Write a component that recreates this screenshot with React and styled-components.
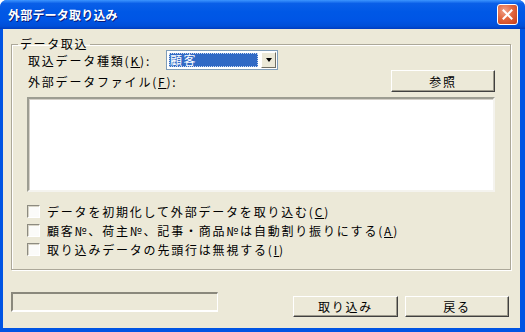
import React from 'react';
import styled, { createGlobalStyle } from 'styled-components';

const GlobalStyle = createGlobalStyle`
    html, body {
        margin: 0;
        padding: 0;
        background: #ffffff;
    }
`;

const FONT = `"Noto Sans CJK JP", "DejaVu Sans", sans-serif`;

const Window = styled.div`
    width: 525px;
    height: 332px;
    display: flex;
    flex-direction: column;
    background: #0054e3;
    border-radius: 7px 7px 0 0;
    overflow: hidden;
    font-family: ${FONT};
    font-size: 12px;
    color: #000;
`;

const TitleBar = styled.div`
    height: 29px;
    flex: none;
    display: flex;
    align-items: center;
    justify-content: space-between;
    padding: 0 7px 0 8px;
    background: linear-gradient(
        to bottom,
        #3d95ff 0%,
        #0a5fe8 12%,
        #0058e6 40%,
        #0055e5 70%,
        #004fd8 90%,
        #003cc0 100%
    );
`;

const Title = styled.span`
    color: #fff;
    font-weight: bold;
    font-size: 12px;
    line-height: 14px;
    letter-spacing: 0.2px;
    text-shadow: 1px 1px 0 #0a1b7a;
`;

const CloseButton = styled.div`
    width: 19px;
    height: 19px;
    border: 1px solid #fff;
    border-radius: 3px;
    display: flex;
    align-items: center;
    justify-content: center;
    background: radial-gradient(circle at 35% 30%, #f0a28a 0%, #e2673f 45%, #c53c17 100%);
`;

const Client = styled.div`
    flex: 1;
    display: flex;
    flex-direction: column;
    margin: 0 5px 4px 3px;
    padding: 9px 9px 11px 8px;
    background: #ece9d8;
`;

const GroupBox = styled.fieldset`
    margin: 0;
    padding: 0 15px 10px 16px;
    border: 1px solid #aca899;
    box-shadow: 1px 1px 0 #fff, inset 1px 1px 0 #fff;
    min-inline-size: 0;
`;

const Legend = styled.legend`
    margin-left: -10px;
    padding: 0 2px;
    font-size: 12px;
    line-height: 12px;
    letter-spacing: 1.6px;
`;

const Row = styled.div`
    display: flex;
    align-items: center;
    justify-content: ${(p) => p.$justify || 'flex-start'};
    height: ${(p) => p.$height}px;
`;

const Label = styled.span`
    letter-spacing: 1.8px;
    width: ${(p) => (p.$width ? `${p.$width}px` : 'auto')};
    flex: none;
    white-space: nowrap;
`;

const Combo = styled.div`
    width: 110px;
    height: 18px;
    border: 1px solid #7f9db9;
    background: #fff;
    display: flex;
    align-items: stretch;
`;

const ComboValue = styled.div`
    flex: 1;
    margin: 2px;
    padding-left: 1px;
    background: #316ac5;
    color: #fff;
    outline: 1px dotted #c9d8ee;
    outline-offset: -1px;
    font-size: 12px;
    line-height: 14px;
    letter-spacing: 1.5px;
`;

const ComboArrow = styled.div`
    width: 15px;
    margin: 1px;
    background: #ece9d8;
    border-top: 1px solid #fff;
    border-left: 1px solid #fff;
    border-right: 1px solid #716f64;
    border-bottom: 1px solid #716f64;
    box-sizing: border-box;
    display: flex;
    align-items: center;
    justify-content: center;
    &::after {
        content: '';
        border-left: 3px solid transparent;
        border-right: 3px solid transparent;
        border-top: 4px solid #000;
    }
`;

const Button = styled.button`
    width: ${(p) => p.$width}px;
    height: ${(p) => p.$height || 21}px;
    padding: 0;
    margin: 0;
    font-family: ${FONT};
    font-size: 12px;
    letter-spacing: 1.7px;
    color: #000;
    background: #ece9d8;
    border-top: 1px solid #fff;
    border-left: 1px solid #fff;
    border-right: 1px solid #404040;
    border-bottom: 1px solid #404040;
    box-shadow: inset -1px -1px 0 #9d9a8c;
    border-radius: 0;
`;

const FileBox = styled.div`
    height: 91px;
    margin: 5px 0 0 -1px;
    background: #fff;
    border-top: 2px solid #9d9d92;
    border-left: 2px solid #9d9d92;
    border-right: 2px solid #f4f3ee;
    border-bottom: 2px solid #f4f3ee;
    box-shadow: inset 1px 1px 0 #d4d0c8;
`;

const CheckList = styled.div`
    margin-top: 10px;
    display: flex;
    flex-direction: column;
`;

const CheckRow = styled.label`
    display: flex;
    align-items: center;
    height: 19px;
    margin-left: -1px;
    gap: 7px;
`;

const CheckBox = styled.span`
    width: 13px;
    height: 13px;
    box-sizing: border-box;
    flex: none;
    background: #fbfbf9;
    border-top: 1px solid #8d8b80;
    border-left: 1px solid #8d8b80;
    border-right: 1px solid #fff;
    border-bottom: 1px solid #fff;
    box-shadow: inset 1px 1px 0 #d8d5c8;
`;

const Footer = styled.div`
    margin-top: auto;
    display: flex;
    align-items: flex-start;
    padding-right: 2px;
`;

const StatusBox = styled.div`
    width: 207px;
    height: 20px;
    box-sizing: border-box;
    border-top: 2px solid #8a887c;
    border-left: 2px solid #8a887c;
    border-right: 1px solid #fff;
    border-bottom: 2px solid #fff;
`;

const FooterButtons = styled.div`
    margin-left: auto;
    margin-top: 4px;
    display: flex;
    gap: 7px;
`;

const options = [
    { key: 'C', text: 'データを初期化して外部データを取り込む' },
    { key: 'A', text: '顧客№、荷主№、記事・商品№は自動割り振りにする' },
    { key: 'I', text: '取り込みデータの先頭行は無視する' }
];

export default function App() {
    return (
        <>
            <GlobalStyle />
            <Window>
                <TitleBar>
                    <Title>外部データ取り込み</Title>
                    <CloseButton>
                        <svg width="11" height="11" viewBox="0 0 11 11">
                            <path d="M1.5 1.5 L9.5 9.5 M9.5 1.5 L1.5 9.5" stroke="#fff" strokeWidth="2" strokeLinecap="square" />
                        </svg>
                    </CloseButton>
                </TitleBar>
                <Client>
                    <GroupBox>
                        <Legend>データ取込</Legend>
                        <Row $height={20}>
                            <Label $width={138}>取込データ種類(<u>K</u>):</Label>
                            <Combo>
                                <ComboValue>顧客</ComboValue>
                                <ComboArrow />
                            </Combo>
                        </Row>
                        <Row $height={22} $justify="space-between">
                            <Label>外部データファイル(<u>F</u>):</Label>
                            <Button $width={104} $height={22}>参照</Button>
                        </Row>
                        <FileBox />
                        <CheckList>
                            {options.map((opt) => (
                                <CheckRow key={opt.key}>
                                    <CheckBox />
                                    <Label>{opt.text}(<u>{opt.key}</u>)</Label>
                                </CheckRow>
                            ))}
                        </CheckList>
                    </GroupBox>
                    <Footer>
                        <StatusBox />
                        <FooterButtons>
                            <Button $width={105}>取り込み</Button>
                            <Button $width={104}>戻る</Button>
                        </FooterButtons>
                    </Footer>
                </Client>
            </Window>
        </>
    );
}
